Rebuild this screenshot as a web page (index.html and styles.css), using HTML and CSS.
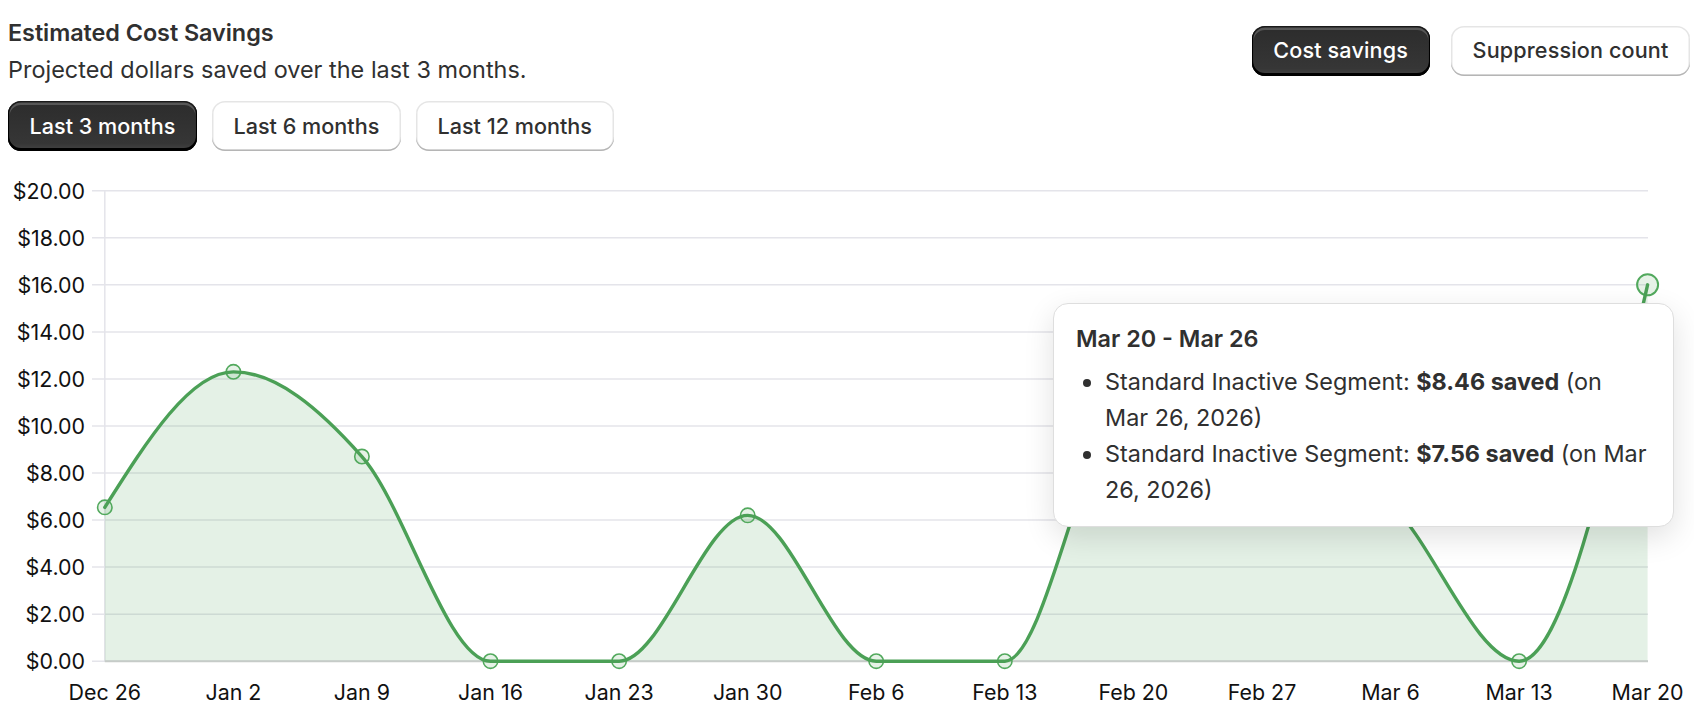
FILE: index.html
```html
<!DOCTYPE html>
<html lang="en">
<head>
<meta charset="utf-8">
<title>Estimated Cost Savings</title>
<link rel="stylesheet" href="styles.css">
</head>
<body>
<main class="card">
  <header class="head">
    <div class="intro">
      <h1 class="title">Estimated Cost Savings</h1>
      <p class="sub">Projected dollars saved over the last 3 months.</p>
    </div>
    <div class="btns">
      <button class="btn btn-on">Cost savings</button>
      <button class="btn">Suppression count</button>
    </div>
  </header>
  <div class="btns ranges">
    <button class="btn btn-on">Last 3 months</button>
    <button class="btn">Last 6 months</button>
    <button class="btn">Last 12 months</button>
  </div>
  <div class="chart">
    <svg class="plot" viewBox="0 160 1694 546" width="1694" height="546" xmlns="http://www.w3.org/2000/svg">
      <g class="grid">
        <line x1="92" x2="1648" y1="190.7" y2="190.7"/>
        <line x1="92" x2="1648" y1="237.8" y2="237.8"/>
        <line x1="92" x2="1648" y1="284.8" y2="284.8"/>
        <line x1="92" x2="1648" y1="331.9" y2="331.9"/>
        <line x1="92" x2="1648" y1="378.9" y2="378.9"/>
        <line x1="92" x2="1648" y1="426" y2="426"/>
        <line x1="92" x2="1648" y1="473" y2="473"/>
        <line x1="92" x2="1648" y1="520.1" y2="520.1"/>
        <line x1="92" x2="1648" y1="567.1" y2="567.1"/>
        <line x1="92" x2="1648" y1="614.2" y2="614.2"/>
        <line x1="92" x2="1648" y1="661.2" y2="661.2"/>
        <line x1="104.8" x2="104.8" y1="190.7" y2="661.2"/>
      </g>
      <path class="area" d="M104.8 507.35C147.7 439.6 190.5 371.84 233.4 371.84C276.2 371.84 319 408.3 361.9 456.53C404.8 504.7 447.6 661.2 490.5 661.2L619.1 661.2C662 661.2 704.8 515.35 747.7 515.35C790.5 515.35 833.3 661.2 876.2 661.2L1004.8 661.2C1047.7 661.2 1090.5 393 1133.4 393C1176.3 393 1219.1 407.6 1262 426C1304.9 444.4 1347.6 464.4 1390.5 503.6C1433.4 542.8 1476.2 661.2 1519.1 661.2C1562 661.2 1604.7 473 1647.6 284.8L1647.6 661.2L104.8 661.2Z"/>
      <line class="base" x1="104.8" x2="1648" y1="661.2" y2="661.2"/>
      <g class="pts">
        <circle cx="104.8" cy="507.35" r="7.2"/>
        <circle cx="233.4" cy="371.84" r="7.2"/>
        <circle cx="361.9" cy="456.53" r="7.2"/>
        <circle cx="490.5" cy="661.2" r="7.2"/>
        <circle cx="619.1" cy="661.2" r="7.2"/>
        <circle cx="747.7" cy="515.35" r="7.2"/>
        <circle cx="876.2" cy="661.2" r="7.2"/>
        <circle cx="1004.8" cy="661.2" r="7.2"/>
        <circle cx="1519.1" cy="661.2" r="7.2"/>
        <circle class="pt-on" cx="1647.6" cy="284.8" r="10.5"/>
      </g>
      <path class="line" d="M104.8 507.35C147.7 439.6 190.5 371.84 233.4 371.84C276.2 371.84 319 408.3 361.9 456.53C404.8 504.7 447.6 661.2 490.5 661.2L619.1 661.2C662 661.2 704.8 515.35 747.7 515.35C790.5 515.35 833.3 661.2 876.2 661.2L1004.8 661.2C1047.7 661.2 1090.5 393 1133.4 393C1176.3 393 1219.1 407.6 1262 426C1304.9 444.4 1347.6 464.4 1390.5 503.6C1433.4 542.8 1476.2 661.2 1519.1 661.2C1562 661.2 1604.7 473 1647.6 284.8"/>
      <g class="ylabels">
        <text x="85" y="190.7">$20.00</text>
        <text x="85" y="237.8">$18.00</text>
        <text x="85" y="284.8">$16.00</text>
        <text x="85" y="331.9">$14.00</text>
        <text x="85" y="378.9">$12.00</text>
        <text x="85" y="426">$10.00</text>
        <text x="85" y="473">$8.00</text>
        <text x="85" y="520.1">$6.00</text>
        <text x="85" y="567.1">$4.00</text>
        <text x="85" y="614.2">$2.00</text>
        <text x="85" y="661.2">$0.00</text>
      </g>
      <g class="xlabels">
        <text x="104.8" y="700">Dec 26</text>
        <text x="233.4" y="700">Jan 2</text>
        <text x="361.9" y="700">Jan 9</text>
        <text x="490.5" y="700">Jan 16</text>
        <text x="619.1" y="700">Jan 23</text>
        <text x="747.7" y="700">Jan 30</text>
        <text x="876.2" y="700">Feb 6</text>
        <text x="1004.8" y="700">Feb 13</text>
        <text x="1133.4" y="700">Feb 20</text>
        <text x="1262" y="700">Feb 27</text>
        <text x="1390.5" y="700">Mar 6</text>
        <text x="1519.1" y="700">Mar 13</text>
        <text x="1647.6" y="700">Mar 20</text>
      </g>
    </svg>
    <aside class="tip">
      <h2 class="tip-title">Mar 20 - Mar 26</h2>
      <ul class="tip-list">
        <li>Standard Inactive Segment: <b>$8.46 saved</b> (on Mar 26, 2026)</li>
        <li>Standard Inactive Segment: <b>$7.56 saved</b> (on Mar 26, 2026)</li>
      </ul>
    </aside>
  </div>
</main>
</body>
</html>
```
FILE: styles.css
```css
* { box-sizing: border-box; }
html, body { margin: 0; padding: 0; background: #fff; overflow: hidden; }
body { font-family: Inter, "Liberation Sans", sans-serif; color: #303030; }
.card { width: 1694px; height: 706px; position: relative; padding-top: 19px; }
.head { display: flex; justify-content: space-between; padding: 0 4px 0 8px; }
.intro { height: 82px; }
.title { margin: 0; font-size: 23.4px; line-height: 27px; font-weight: 600; letter-spacing: -.05px; }
.sub { margin: 10px 0 0; font-size: 23.4px; line-height: 27px; font-weight: 400; letter-spacing: .03px; }
.btns { display: flex; gap: 21.5px; padding-top: 7px; }
.ranges { gap: 15px; padding: 0 0 0 8px; }
.btn {
  height: 50px; padding: 0 21.6px; border: 0; border-radius: 13px; background: #fff; color: #303030;
  font: 500 21.6px/24px Inter, "Liberation Sans", sans-serif;
  box-shadow: inset 0 -1.5px 0 0 #b5b5b5, inset 0 0 0 1.5px rgba(0,0,0,.1);
}
.head .btn { padding-bottom: 2px; letter-spacing: .13px; }
.btn-on {
  background: linear-gradient(#2c2c2c, #363636 85%, #454545); color: #fff;
  box-shadow: inset 0 -2px 0 1px #000, inset 0 0 0 1.5px #1a1a1a, inset 0 2.5px 0 1.5px rgba(255,255,255,.2);
}
.chart { position: absolute; left: 0; top: 160px; width: 1694px; height: 546px; }
.plot { display: block; }
.grid line { stroke: #e4e4ea; stroke-width: 1.5; }
.area { fill: #4ca055; fill-opacity: .15; }
.base { stroke: #c6cbc8; stroke-width: 2; }
.line { fill: none; stroke: #4ba056; stroke-width: 3.4; stroke-linecap: round; }
.pts circle { fill: #4ca055; fill-opacity: .14; stroke: #52a95d; stroke-width: 1.6; }
.pts .pt-on { stroke-width: 2; }
.ylabels text { font-size: 21.4px; text-anchor: end; dominant-baseline: central; fill: #111; }
.xlabels text { font-size: 21.4px; text-anchor: middle; fill: #111; }
.tip {
  position: absolute; left: 1053px; top: 142.5px; width: 621px; height: 224px; padding: 17px 23px 17px 22px;
  background: #fff; border: 1px solid #dedede; border-radius: 15px;
  box-shadow: 0 10px 30px rgba(0,0,0,.12);
}
.tip-title { margin: 0 0 7px; font-size: 23.4px; line-height: 36px; font-weight: 600; }
.tip-list { margin: 0; padding: 0 0 0 29px; font-size: 23.4px; line-height: 36px; }
.tip-list b { font-weight: 700; }
```
